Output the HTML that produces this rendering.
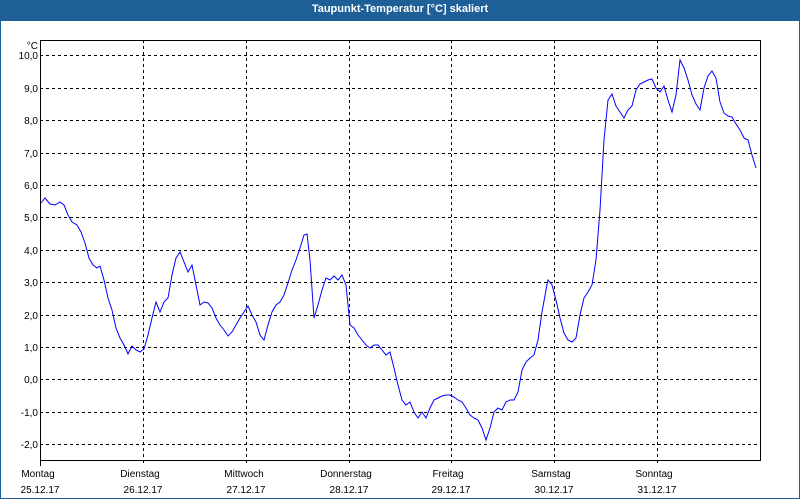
<!DOCTYPE html>
<html><head><style>
html,body{margin:0;padding:0;background:#fff}
body{width:800px;height:500px;position:relative;overflow:hidden;font-family:"Liberation Sans",sans-serif}
.t{position:absolute;left:0;top:0;width:800px;height:21px;background:#1d5f96;color:#fff;font-weight:bold;font-size:11px;line-height:19px;text-align:center}
.fr{position:absolute;left:0;top:21px;width:798px;height:477px;border:1px solid #1d5f96;border-top:none}
</style></head><body>
<div class="t">Taupunkt-Temperatur [°C] skaliert</div>
<div class="fr"></div>
<svg width="800" height="500" style="position:absolute;left:0;top:0" font-family="Liberation Sans, sans-serif" font-size="10">
<g stroke="#000" stroke-width="1" stroke-dasharray="3,3" shape-rendering="crispEdges">
<line x1="40" x2="760" y1="55.5" y2="55.5"/><line x1="40" x2="760" y1="88.5" y2="88.5"/><line x1="40" x2="760" y1="120.5" y2="120.5"/><line x1="40" x2="760" y1="153.5" y2="153.5"/><line x1="40" x2="760" y1="185.5" y2="185.5"/><line x1="40" x2="760" y1="217.5" y2="217.5"/><line x1="40" x2="760" y1="250.5" y2="250.5"/><line x1="40" x2="760" y1="282.5" y2="282.5"/><line x1="40" x2="760" y1="315.5" y2="315.5"/><line x1="40" x2="760" y1="347.5" y2="347.5"/><line x1="40" x2="760" y1="379.5" y2="379.5"/><line x1="40" x2="760" y1="412.5" y2="412.5"/><line x1="40" x2="760" y1="444.5" y2="444.5"/>
<line y1="40" y2="466" x1="143.5" x2="143.5"/><line y1="40" y2="466" x1="246.5" x2="246.5"/><line y1="40" y2="466" x1="349.5" x2="349.5"/><line y1="40" y2="466" x1="451.5" x2="451.5"/><line y1="40" y2="466" x1="554.5" x2="554.5"/><line y1="40" y2="466" x1="657.5" x2="657.5"/>
</g>
<g fill="none" stroke="#000" stroke-width="1" shape-rendering="crispEdges">
<path d="M40.5 40.5H760.5V460.5H40.5Z"/>
<path d="M40.5 460V466"/>
</g>
<polyline fill="none" stroke="#0000ff" stroke-width="1" points="41,203 45,198 50,204 55,205 60,202 64,205 68,215 72,222 77,225 81,232 85,243 89,258 93,265 97,268 100,266 104,280 108,298 112,310 116,328 120,338 124,345 128,354 132,346 136,350 140,352 144,349 148,335 152,318 156,302 160,312 164,302 168,298 172,275 176,258 180,252 184,262 188,272 192,265 196,285 200,305 204,302 208,303 212,308 216,318 220,325 224,330 228,336 232,332 236,325 240,318 244,312 248,306 252,315 256,322 260,335 264,340 268,325 272,312 276,305 280,302 284,295 288,283 292,270 296,260 300,248 304,235 307,234 310,260 314,318 318,305 322,290 326,278 330,280 334,276 338,280 342,275 346,285 350,325 354,328 358,335 362,340 366,345 370,348 374,345 378,345 382,350 386,355 390,352 394,368 398,385 402,400 406,405 410,402 414,412 418,418 422,412 426,418 430,408 434,400 438,398 442,396 446,395 450,395 454,397 458,400 462,402 466,408 470,415 474,418 478,420 482,428 486,440 490,428 494,412 498,408 502,410 506,402 510,400 514,400 518,392 522,370 526,362 530,358 534,355 538,340 542,312 546,290 548,280 552,285 556,300 560,318 564,333 568,340 572,342 576,338 580,315 584,298 588,292 592,285 596,260 600,210 604,140 608,100 612,94 616,106 620,112 624,118 628,110 632,106 636,90 640,84 644,82 648,80 652,79 656,88 660,92 664,86 668,100 672,112 676,95 680,60 684,68 688,80 692,95 696,104 700,110 704,88 708,76 712,71 716,78 720,102 724,113 728,116 732,117 736,124 740,130 744,138 748,140 752,155 756,168"/>
<g fill="#000" text-anchor="end">
<text x="38" y="49">°C</text>
<text x="38" y="59">10,0</text><text x="38" y="92">9,0</text><text x="38" y="124">8,0</text><text x="38" y="157">7,0</text><text x="38" y="189">6,0</text><text x="38" y="221">5,0</text><text x="38" y="254">4,0</text><text x="38" y="286">3,0</text><text x="38" y="319">2,0</text><text x="38" y="351">1,0</text><text x="38" y="383">0,0</text><text x="38" y="416">-1,0</text><text x="38" y="448">-2,0</text>
</g>
<g fill="#000" text-anchor="middle">
<text x="38" y="477">Montag</text><text x="40" y="493">25.12.17</text>
<text x="140" y="477">Dienstag</text><text x="143" y="493">26.12.17</text>
<text x="244" y="477">Mittwoch</text><text x="246" y="493">27.12.17</text>
<text x="346" y="477">Donnerstag</text><text x="349" y="493">28.12.17</text>
<text x="448" y="477">Freitag</text><text x="451" y="493">29.12.17</text>
<text x="551" y="477">Samstag</text><text x="554" y="493">30.12.17</text>
<text x="654" y="477">Sonntag</text><text x="657" y="493">31.12.17</text>
</g>
</svg>
</body></html>
